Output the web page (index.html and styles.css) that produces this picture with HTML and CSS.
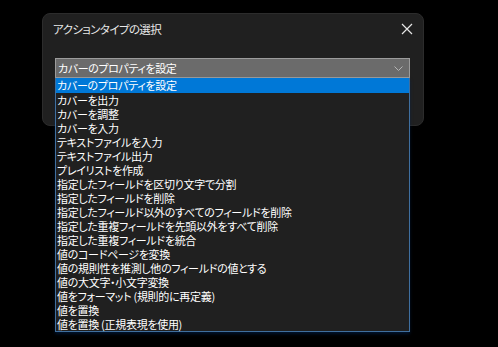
FILE: index.html
```html
<!DOCTYPE html>
<html lang="ja">
<head>
    <meta charset="UTF-8">
    <title>アクションタイプの選択</title>
    <link rel="stylesheet" href="styles.css">
</head>
<body>
    <div class="dialog">
        <div class="dialog-head">
            <span class="dialog-title">アクションタイプの選択</span>
            <svg class="close" width="12" height="12" viewBox="0 0 12 12">
                <path d="M1 1L11 11M11 1L1 11" stroke="#e6e6e6" stroke-width="1.2" fill="none"/>
            </svg>
        </div>
        <div class="combo">
            <div class="combo-box">
                <span>カバーのプロパティを設定</span>
                <svg class="chevron" width="9" height="5" viewBox="0 0 9 5">
                    <path d="M0.5 0.5L4.5 4.5L8.5 0.5" stroke="#b4b4b4" stroke-width="1" fill="none"/>
                </svg>
            </div>
            <ul class="list">
                <li class="selected">カバーのプロパティを設定</li>
                <li>カバーを出力</li>
                <li>カバーを調整</li>
                <li>カバーを入力</li>
                <li>テキストファイルを入力</li>
                <li>テキストファイル出力</li>
                <li>プレイリストを作成</li>
                <li>指定したフィールドを区切り文字で分割</li>
                <li>指定したフィールドを削除</li>
                <li>指定したフィールド以外のすべてのフィールドを削除</li>
                <li>指定した重複フィールドを先頭以外をすべて削除</li>
                <li>指定した重複フィールドを統合</li>
                <li>値のコードページを変換</li>
                <li>値の規則性を推測し他のフィールドの値とする</li>
                <li>値の大文字・小文字変換</li>
                <li>値をフォーマット (規則的に再定義)</li>
                <li>値を置換</li>
                <li>値を置換 (正規表現を使用)</li>
            </ul>
        </div>
    </div>
</body>
</html>
```

FILE: styles.css
```css
body {
    margin: 0;
    padding: 13px 0 0 42px;
    background: #000;
    height: 347px;
    box-sizing: border-box;
    font-family: "Noto Sans CJK JP", "Noto Sans", sans-serif;
    font-feature-settings: "palt";
    color: #fff;
    overflow: hidden;
}
.dialog {
    width: 382px;
    height: 113px;
    box-sizing: border-box;
    background: #202020;
    border: 1px solid #2c2c2c;
    border-radius: 8px;
    padding: 0 0 0 12px;
}
.dialog-head {
    display: flex;
    justify-content: space-between;
    align-items: center;
    height: 28px;
    padding: 0 10px 0 0;
    margin-top: 1px;
}
.dialog-title {
    font-size: 11.5px;
    letter-spacing: -0.6px;
    color: #e8e8e8;
    margin-left: -2px;
}
.combo {
    position: relative;
    width: 355px;
    margin-top: 15px;
}
.combo-box {
    display: flex;
    justify-content: space-between;
    align-items: center;
    height: 20px;
    box-sizing: border-box;
    background: #6b6b6b;
    border: 1px solid #9c9c9c;
    padding: 0 6px 0 2px;
    font-size: 11px;
    letter-spacing: -0.4px;
    line-height: 18px;
}
.list {
    position: absolute;
    top: 20px;
    left: 0;
    width: 355px;
    box-sizing: border-box;
    margin: 0;
    padding: 0;
    list-style: none;
    background: #202020;
    border: 1px solid #3f6f9f;
    border-top: none;
    box-shadow: 0 2px 3px rgba(0, 40, 90, 0.5);
}
.list li {
    height: 14px;
    line-height: 14px;
    font-size: 11px;
    letter-spacing: -0.3px;
    padding-left: 1px;
    white-space: nowrap;
}
.list li.selected {
    background: #0078d7;
    height: 15px;
}
```
